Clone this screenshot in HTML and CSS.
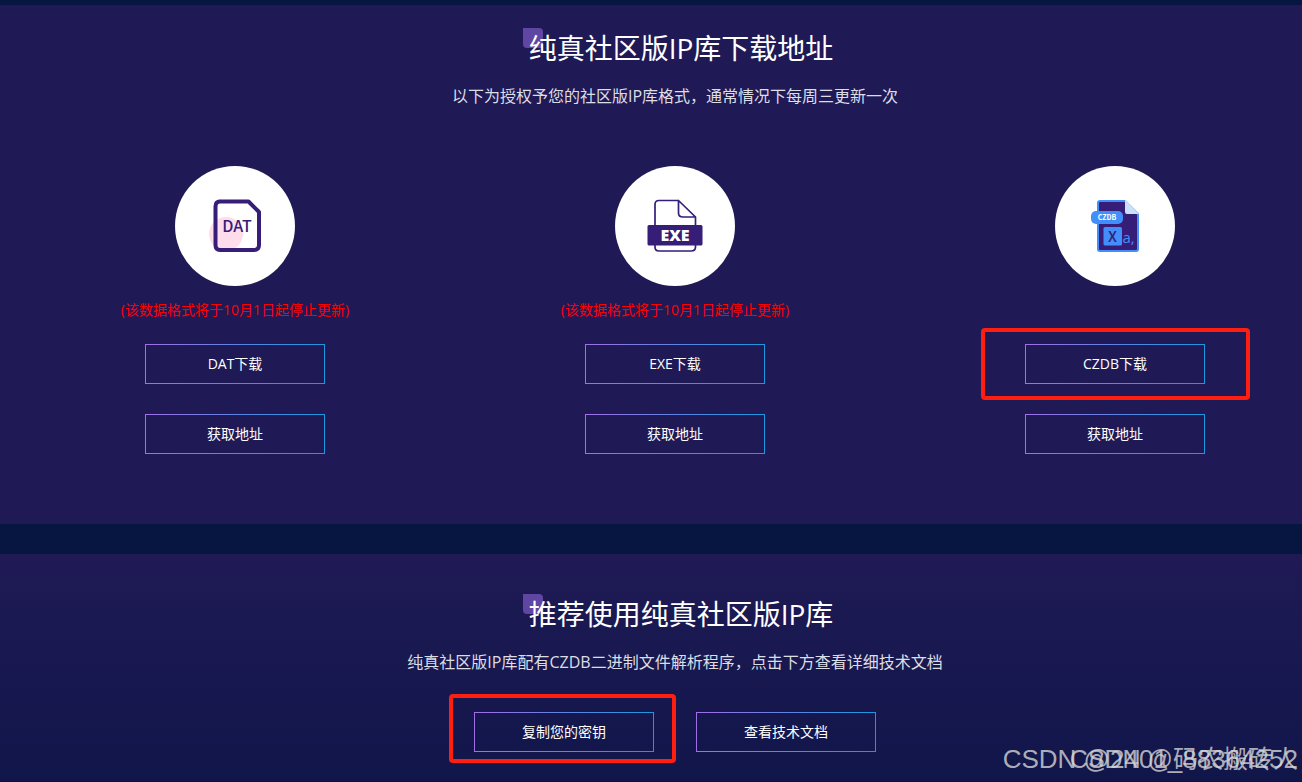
FILE: index.html
```
<!DOCTYPE html>
<html lang="zh-CN">
<head>
    <meta charset="UTF-8">
    <meta name="viewport" content="width=device-width, initial-scale=1.0">
    <title>纯真社区版IP库下载</title>
    <link rel="stylesheet" href="styles.css">
</head>
<body>

    <!-- Downloads -->
    <section class="panel download">
        <h2 class="title">纯真社区版IP库下载地址</h2>
        <p class="subtitle">以下为授权予您的社区版IP库格式，通常情况下每周三更新一次</p>

        <div class="format-list">
            <div class="format">
                <div class="format-icon">
                    <svg width="120" height="120" viewBox="0 0 120 120">
                        <circle cx="51" cy="68" r="17" fill="#ffdcec"/>
                        <path d="M44 35.500H73.500L84 46V79Q84 84 79 84H45Q40.500 84 40.500 79V40.500Q40.500 35.500 45 35.500Z" fill="none" stroke="#361d78" stroke-width="4" stroke-linejoin="round"/>
                        <text class="dat-text" x="62" y="66" text-anchor="middle">DAT</text>
                    </svg>
                </div>
                <p class="notice">(该数据格式将于10月1日起停止更新)</p>
                <button type="button" class="btn">DAT下载</button>
                <button type="button" class="btn">获取地址</button>
            </div>

            <div class="format">
                <div class="format-icon">
                    <svg width="120" height="120" viewBox="0 0 120 120">
                        <path d="M63.500 34.500H44Q40 34.500 40 38.500V81Q40 85 44 85H76Q80.500 85 80.500 81V51L63.500 34.500V47Q63.500 51 68 51H80.500" fill="none" stroke="#361d78" stroke-width="1.700" stroke-linejoin="round"/>
                        <rect x="32.500" y="59" width="55" height="20.500" rx="1.500" fill="#361d78"/>
                        <text class="exe-text" x="60" y="75" text-anchor="middle">EXE</text>
                    </svg>
                </div>
                <p class="notice">(该数据格式将于10月1日起停止更新)</p>
                <button type="button" class="btn">EXE下载</button>
                <button type="button" class="btn">获取地址</button>
            </div>

            <div class="format">
                <div class="format-icon">
                    <svg width="120" height="120" viewBox="0 0 120 120">
                        <path d="M45 35H70L83 48V83Q83 85 81 85H45Q43 85 43 83V37Q43 35 45 35Z" fill="#361d78" stroke="#428ffc" stroke-width="2"/>
                        <path d="M70 33.500L84 48H72Q70 48 70 46Z" fill="#c8e1ff"/>
                        <rect x="36" y="45" width="32" height="13" rx="5" fill="#428ffc"/>
                        <text class="czdb-text" x="52" y="54" text-anchor="middle">CZDB</text>
                        <rect x="48.500" y="61" width="18.500" height="18.500" rx="1.500" fill="#428ffc"/>
                        <text class="x-text" x="57.500" y="75.500" text-anchor="middle">X</text>
                        <text class="a-text" x="67.500" y="77">a,</text>
                    </svg>
                </div>
                <p class="notice"></p>
                <div class="marked marked-wide">
                    <button type="button" class="btn">CZDB下载</button>
                </div>
                <button type="button" class="btn">获取地址</button>
            </div>
        </div>
    </section>

    <!-- Key and docs -->
    <section class="panel recommend">
        <h2 class="title">推荐使用纯真社区版IP库</h2>
        <p class="subtitle">纯真社区版IP库配有CZDB二进制文件解析程序，点击下方查看详细技术文档</p>
        <div class="actions">
            <div class="marked">
                <button type="button" class="btn">复制您的密钥</button>
            </div>
            <button type="button" class="btn">查看技术文档</button>
        </div>
        <span class="watermark watermark-id">CSDN @2401_88364252</span>
        <span class="watermark">CSDN @码农搬砖人</span>
    </section>

</body>
</html>
```
FILE: styles.css
```
body {
    margin: 0;
    padding-top: 5px;
    background-color: #071640;
    color: #fff;
    font-family: "Open Sans", "Noto Sans CJK SC", sans-serif;
}

.panel {
    display: flex;
    flex-direction: column;
    align-items: center;
    position: relative;
    padding-left: 48px;
    background-color: #1f1a55;
}

.download {
    padding-top: 22px;
    padding-bottom: 70px;
    margin-bottom: 30px;
}

.recommend {
    padding-top: 39px;
    padding-bottom: 29px;
    background-image: linear-gradient(#1f1a55, #11164a);
}

.title {
    position: relative;
    z-index: 0;
    margin: 0;
    padding-left: 12px;
    font-size: 28px;
    font-weight: 400;
    line-height: 42px;
}

.title::before {
    content: "";
    position: absolute;
    z-index: -1;
    left: 6px;
    top: 1px;
    width: 20px;
    height: 20px;
    border-radius: 0 4px 0 4px;
    background-color: #6046a3;
}

.subtitle {
    margin: 15px 0 0;
    color: #dddde6;
    font-size: 16px;
    line-height: 24px;
}

.format-list {
    display: grid;
    grid-template-columns: repeat(3, 240px);
    column-gap: 200px;
    justify-content: center;
    margin-top: 58px;
}

.format {
    display: flex;
    flex-direction: column;
    align-items: center;
    gap: 30px;
}

.format-icon {
    width: 120px;
    height: 120px;
    border-radius: 50%;
    background-color: #fff;
}

.format-icon svg {
    display: block;
}

.dat-text {
    fill: #361d78;
    font-family: "Noto Sans CJK SC", sans-serif;
    font-size: 16px;
    font-weight: 500;
}

.exe-text {
    fill: #fff;
    font-size: 16px;
    font-weight: 800;
}

.czdb-text {
    fill: #fff;
    font-family: "Noto Sans CJK SC", sans-serif;
    font-size: 7px;
    font-weight: 700;
}

.x-text {
    fill: #361d78;
    font-family: "Noto Sans CJK SC", sans-serif;
    font-size: 15px;
    font-weight: 500;
}

.a-text {
    fill: #428ffc;
    font-size: 15px;
}

.notice {
    height: 20px;
    margin: -16px 0 -6px;
    color: #f00;
    font-size: 14px;
    line-height: 20px;
    white-space: nowrap;
}

.btn {
    display: block;
    width: 180px;
    height: 40px;
    padding: 0;
    border: 1px solid;
    border-image: linear-gradient(to right, #a36ee8, #1a98e0) 1;
    background: none;
    color: #fff;
    font-family: inherit;
    font-size: 14px;
    line-height: 20px;
    cursor: pointer;
}

.actions {
    display: flex;
    gap: 42px;
    margin-top: 38px;
}

/* Red frame round the button to press */
.marked {
    position: relative;
}

.marked::before {
    content: "";
    position: absolute;
    inset: -18px -22px -11px -25px;
    border: 4px solid #ff1f10;
    border-radius: 4px;
    pointer-events: none;
}

.marked-wide::before {
    inset: -16px -45px -16px -44px;
}

.watermark {
    position: absolute;
    right: 4px;
    bottom: 6px;
    color: rgba(215, 215, 215, 0.8);
    font-family: "Liberation Sans", "Noto Sans CJK SC", sans-serif;
    font-size: 25px;
    line-height: 32px;
    white-space: nowrap;
}

.watermark-id {
    font-size: 26px;
}
```
